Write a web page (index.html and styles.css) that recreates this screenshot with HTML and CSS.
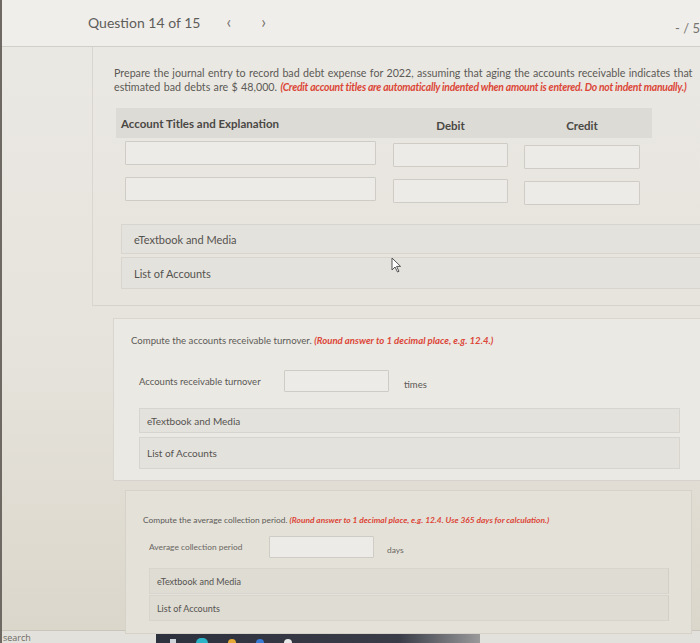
FILE: index.html
```html
<!DOCTYPE html>
<html lang="en">
<head>
    <meta charset="UTF-8">
    <meta name="viewport" content="width=device-width, initial-scale=1.0">
    <title>Question 14 of 15</title>
    <link rel="stylesheet" href="styles.css">
</head>
<body>
    <div class="screen">
        <header class="topbar">
            <span class="q-title">Question 14 of 15</span>
            <span class="q-nav">&lsaquo;</span>
            <span class="q-nav">&rsaquo;</span>
            <span class="q-score">- / 5</span>
        </header>

        <div class="page">
            <!-- part 1: journal entry -->
            <section class="part part-one">
                <p class="prompt">Prepare the journal entry to record bad debt expense for 2022, assuming that aging the accounts receivable indicates that<br>estimated bad debts are $&nbsp;48,000. <em class="hint">(Credit account titles are automatically indented when amount is entered. Do not indent manually.)</em></p>

                <div class="journal">
                    <div class="journal-head">
                        <div class="col-acct">Account Titles and Explanation</div>
                        <div class="col-debit">Debit</div>
                        <div class="col-credit">Credit</div>
                    </div>
                    <div class="journal-row">
                        <input class="col-acct field" type="text">
                        <input class="col-debit field" type="text">
                        <input class="col-credit field" type="text">
                    </div>
                    <div class="journal-row">
                        <input class="col-acct field" type="text">
                        <input class="col-debit field" type="text">
                        <input class="col-credit field" type="text">
                    </div>
                </div>

                <div class="resources">
                    <div class="res-bar">eTextbook and Media</div>
                    <div class="res-bar">List of Accounts</div>
                </div>
                <svg class="cursor" width="11" height="16" viewBox="0 0 11 16">
                    <path d="M1 1 L1 13 L4 10 L6.5 15 L8 14.3 L5.6 9.4 L9.6 9.4 Z" fill="#fff" stroke="#555" stroke-width="1"/>
                </svg>
            </section>

            <!-- part 2: turnover -->
            <section class="part part-two">
                <p class="prompt">Compute the accounts receivable turnover. <em class="hint">(Round answer to 1 decimal place, e.g. 12.4.)</em></p>
                <div class="answer-line">
                    <label class="answer-label">Accounts receivable turnover</label>
                    <input class="field answer-field" type="text">
                    <span class="unit">times</span>
                </div>
                <div class="resources">
                    <div class="res-bar">eTextbook and Media</div>
                    <div class="res-bar">List of Accounts</div>
                </div>
            </section>

            <!-- part 3: collection period -->
            <section class="part part-three">
                <p class="prompt">Compute the average collection period. <em class="hint">(Round answer to 1 decimal place, e.g. 12.4. Use 365 days for calculation.)</em></p>
                <div class="answer-line">
                    <label class="answer-label">Average collection period</label>
                    <input class="field answer-field" type="text">
                    <span class="unit">days</span>
                </div>
                <div class="resources">
                    <div class="res-bar">eTextbook and Media</div>
                    <div class="res-bar">List of Accounts</div>
                </div>
            </section>
        </div>

        <footer class="taskbar">
            <span class="search">search</span>
            <div class="tray">
                <span class="ti ti-grid"></span>
                <span class="ti ti-edge"></span>
                <span class="ti ti-folder"></span>
                <span class="ti ti-blue"></span>
                <span class="ti ti-white"></span>
            </div>
        </footer>
    </div>
</body>
</html>
```

FILE: styles.css
```css
html, body {
    margin: 0;
    padding: 0;
}

body {
    font-family: Lato, "Open Sans", sans-serif;
    color: #5a5854;
    background-color: #ddd9d0;
}

.screen {
    width: 698px;
    height: 643px;
    overflow: hidden;
    border-left: 2px solid #6e6a63;
    background: linear-gradient(180deg, #ebe9e4 0%, #e6e3dc 55%, #dad6ca 100%);
    display: flex;
    flex-direction: column;
}

/* top bar */
.topbar {
    height: 46px;
    flex: none;
    display: flex;
    align-items: center;
    padding-left: 86px;
    background-color: #efeeeb;
    border-bottom: 1px solid #d2cfc9;
}

.q-title {
    font-size: 14px;
    color: #5f5d59;
    margin-top: -2px;
}

.q-nav {
    font-size: 17px;
    color: #77746f;
    margin-left: 26px;
    margin-top: -3px;
}

.q-nav + .q-nav {
    margin-left: 30px;
}

.q-score {
    margin-left: auto;
    margin-right: 0;
    margin-top: 10px;
    font-size: 13px;
    color: #77746f;
}

/* page body */
.page {
    flex: 1;
    min-height: 0;
}

.part {
    position: relative;
}

.part-one {
    margin-left: 90px;
    padding: 19px 0 0 21px;
    height: 239px;
    border-left: 1px solid #d9d6cf;
    border-bottom: 1px solid #d6d3cc;
}

.part-two {
    margin: 12px 0 0 111px;
    padding: 15px 0 0 17px;
    height: 146px;
    border-top: 1px solid #d9d6cf;
    border-left: 1px solid #d9d6cf;
    border-bottom: 1px solid #d6d3cc;
    background-color: #ebe9e4;
}

.part-three {
    margin: 9px 8px 0 123px;
    padding: 22px 0 0 17px;
    height: 120px;
    border: 1px solid #d6d2c9;
    background-color: #e4e1d9;
}

.prompt {
    margin: 0;
    font-size: 11px;
    line-height: 14px;
    white-space: nowrap;
    color: #5c5a56;
}

.part-one .prompt {
    font-size: 10.7px;
    word-spacing: 0.6px;
}

.part-one .hint {
    font-size: 10.4px;
    letter-spacing: -0.25px;
    word-spacing: 0;
}

.hint {
    color: #dc4637;
    font-weight: bold;
}

/* journal table */
.journal {
    margin: 14px 0 0 2px;
    width: 536px;
}

.journal-head,
.journal-row {
    display: flex;
    padding-left: 9px;
}

.journal-head {
    height: 30px;
    align-items: center;
    background-color: #dddbd6;
    font-size: 11.5px;
    font-weight: bold;
    color: #4a4844;
}

.journal-head .col-acct {
    margin-left: -4px;
    width: 255px;
}

.journal-head .col-debit,
.journal-head .col-credit {
    text-align: center;
    margin-top: 4px;
}

.journal-row {
    margin-top: 3px;
}

.journal-row + .journal-row {
    margin-top: 8px;
}

.col-acct {
    width: 251px;
}

.col-debit {
    width: 115px;
    margin-left: 17px;
}

.col-credit {
    width: 116px;
    margin-left: 16px;
}

.field {
    box-sizing: border-box;
    height: 24px;
    border: 1px solid #cfccc5;
    background-color: #ecebe7;
    border-radius: 1px;
    padding: 0;
}

.journal-row .col-debit {
    margin-top: 2px;
}

.journal-row .col-credit {
    margin-top: 4px;
}

/* resource bars */
.resources {
    display: flex;
    flex-direction: column;
    gap: 3px;
    margin-top: 19px;
}

.res-bar {
    box-sizing: border-box;
    height: 30px;
    padding-left: 12px;
    display: flex;
    align-items: center;
    font-size: 11px;
    color: #55534f;
    background-color: #e4e2dd;
    border: 1px solid #d8d5ce;
    border-right: none;
}

.part-one .resources {
    margin-left: 7px;
}

.part-one .res-bar + .res-bar {
    height: 32px;
}

.cursor {
    position: absolute;
    left: 298px;
    top: 210px;
}

/* single-answer parts */
.answer-line {
    display: flex;
    align-items: center;
    margin: 22px 0 0 8px;
}

.answer-label {
    font-size: 9.5px;
    width: 145px;
}

.answer-field {
    width: 105px;
    height: 22px;
}

.unit {
    font-size: 9.5px;
    margin: 6px 0 0 15px;
}

.part-two .prompt {
    font-size: 9.6px;
}

.part-two .resources {
    margin: 16px 20px 0 8px;
    gap: 4px;
}

.part-two .res-bar {
    height: 25px;
    font-size: 10px;
    padding-left: 7px;
    border-right: 1px solid #d8d5ce;
}

.part-two .res-bar + .res-bar {
    height: 32px;
}

.part-three .prompt {
    font-size: 8.4px;
}

.part-three .answer-line {
    margin-top: 9px;
    margin-left: 6px;
}

.part-three .answer-label {
    font-size: 8.4px;
    width: 120px;
    color: #6a6762;
}

.part-three .unit {
    font-size: 8.4px;
    margin-left: 13px;
    color: #6a6762;
}

.part-three .resources {
    margin: 10px 22px 0 6px;
    gap: 1px;
}

.part-three .res-bar {
    height: 26px;
    font-size: 9px;
    padding-left: 7px;
    background-color: #dfdcd4;
    border-right: 1px solid #d3cfc5;
}

/* os taskbar strip */
.taskbar {
    flex: none;
    height: 12px;
    display: flex;
    align-items: flex-end;
    border-top: 1px solid #c9c5bb;
    background-color: #e3e1db;
}

.search {
    font-family: "Open Sans", sans-serif;
    font-size: 9px;
    line-height: 10px;
    color: #6c6a66;
    width: 153px;
    padding-left: 1px;
}

.tray {
    height: 9px;
    width: 310px;
    display: flex;
    align-items: flex-end;
    gap: 20px;
    padding-left: 14px;
    background: linear-gradient(90deg, #2d313d 0%, #3a3d48 75%, rgba(80, 82, 90, 0.5) 100%);
}

.ti {
    width: 8px;
    height: 4px;
    border-radius: 4px 4px 0 0;
}

.ti-grid { background-color: #cfd3da; width: 6px; border-radius: 0; }
.ti-edge { background-color: #2bb3c8; width: 12px; height: 5px; border-radius: 6px 6px 0 0; }
.ti-folder { background-color: #e6a935; }
.ti-blue { background-color: #3a7bd5; }
.ti-white { background-color: #e8e8e8; }
```
